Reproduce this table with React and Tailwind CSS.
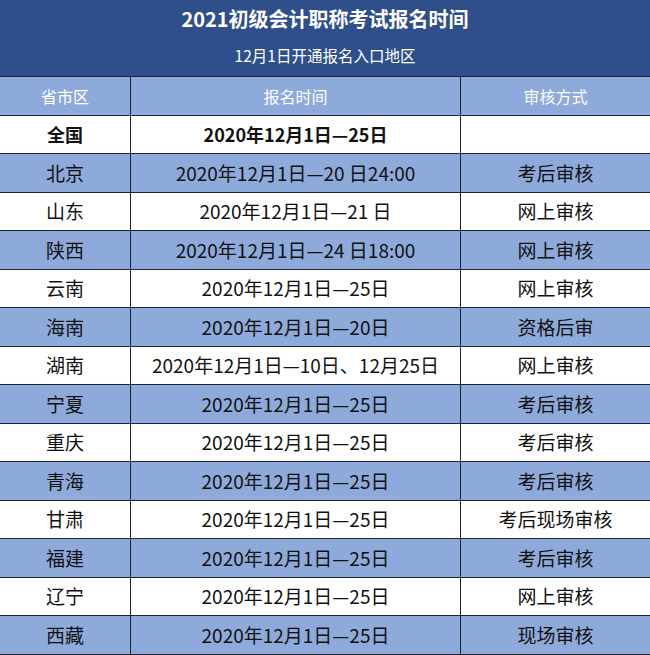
const rows = [
  ["北京", "2020年12月1日—20 日24:00", "考后审核"],
  ["山东", "2020年12月1日—21 日", "网上审核"],
  ["陕西", "2020年12月1日—24 日18:00", "网上审核"],
  ["云南", "2020年12月1日—25日", "网上审核"],
  ["海南", "2020年12月1日—20日", "资格后审"],
  ["湖南", "2020年12月1日—10日、12月25日", "网上审核"],
  ["宁夏", "2020年12月1日—25日", "考后审核"],
  ["重庆", "2020年12月1日—25日", "考后审核"],
  ["青海", "2020年12月1日—25日", "考后审核"],
  ["甘肃", "2020年12月1日—25日", "考后现场审核"],
  ["福建", "2020年12月1日—25日", "考后审核"],
  ["辽宁", "2020年12月1日—25日", "网上审核"],
  ["西藏", "2020年12月1日—25日", "现场审核"],
];

const font = { fontFamily: '"Noto Sans CJK SC", "Noto Sans", sans-serif' };

function Row({ cells, blue, bold, head }) {
  const bg = blue ? "bg-[#8eaadb]" : "bg-white";
  const txt = head ? "text-white text-[16px]" : bold ? "text-[#111] text-[18px] font-bold" : "text-[#111] text-[19px]";
  return (
    <div
      className={`grid grid-cols-[131px_330px_1fr] h-[38.5px] border-b border-[#1c2433] ${bg} ${txt}`}
    >
      {cells.map((c, i) => (
        <div
          key={i}
          className={`flex items-center justify-center whitespace-nowrap ${
            i < 2 ? "border-r border-[#1c2433]" : ""
          }`}
        >
          {c}
        </div>
      ))}
    </div>
  );
}

export default function App() {
  return (
    <div className="w-[650px] h-[655px] overflow-hidden bg-white" style={font}>
      <div className="h-[77px] bg-[#2f4f8b] border-b border-[#1c2433] flex flex-col items-center text-white">
        <div className="text-[20px] font-bold mt-[4px] leading-[30px]">
          2021初级会计职称考试报名时间
        </div>
        <div className="text-[15.5px] mt-[10px] leading-[22px]">12月1日开通报名入口地区</div>
      </div>
      <Row cells={["省市区", "报名时间", "审核方式"]} blue head />
      <Row cells={["全国", "2020年12月1日—25日", ""]} bold />
      {rows.map((r, i) => (
        <Row key={i} cells={r} blue={i % 2 === 0} />
      ))}
    </div>
  );
}
